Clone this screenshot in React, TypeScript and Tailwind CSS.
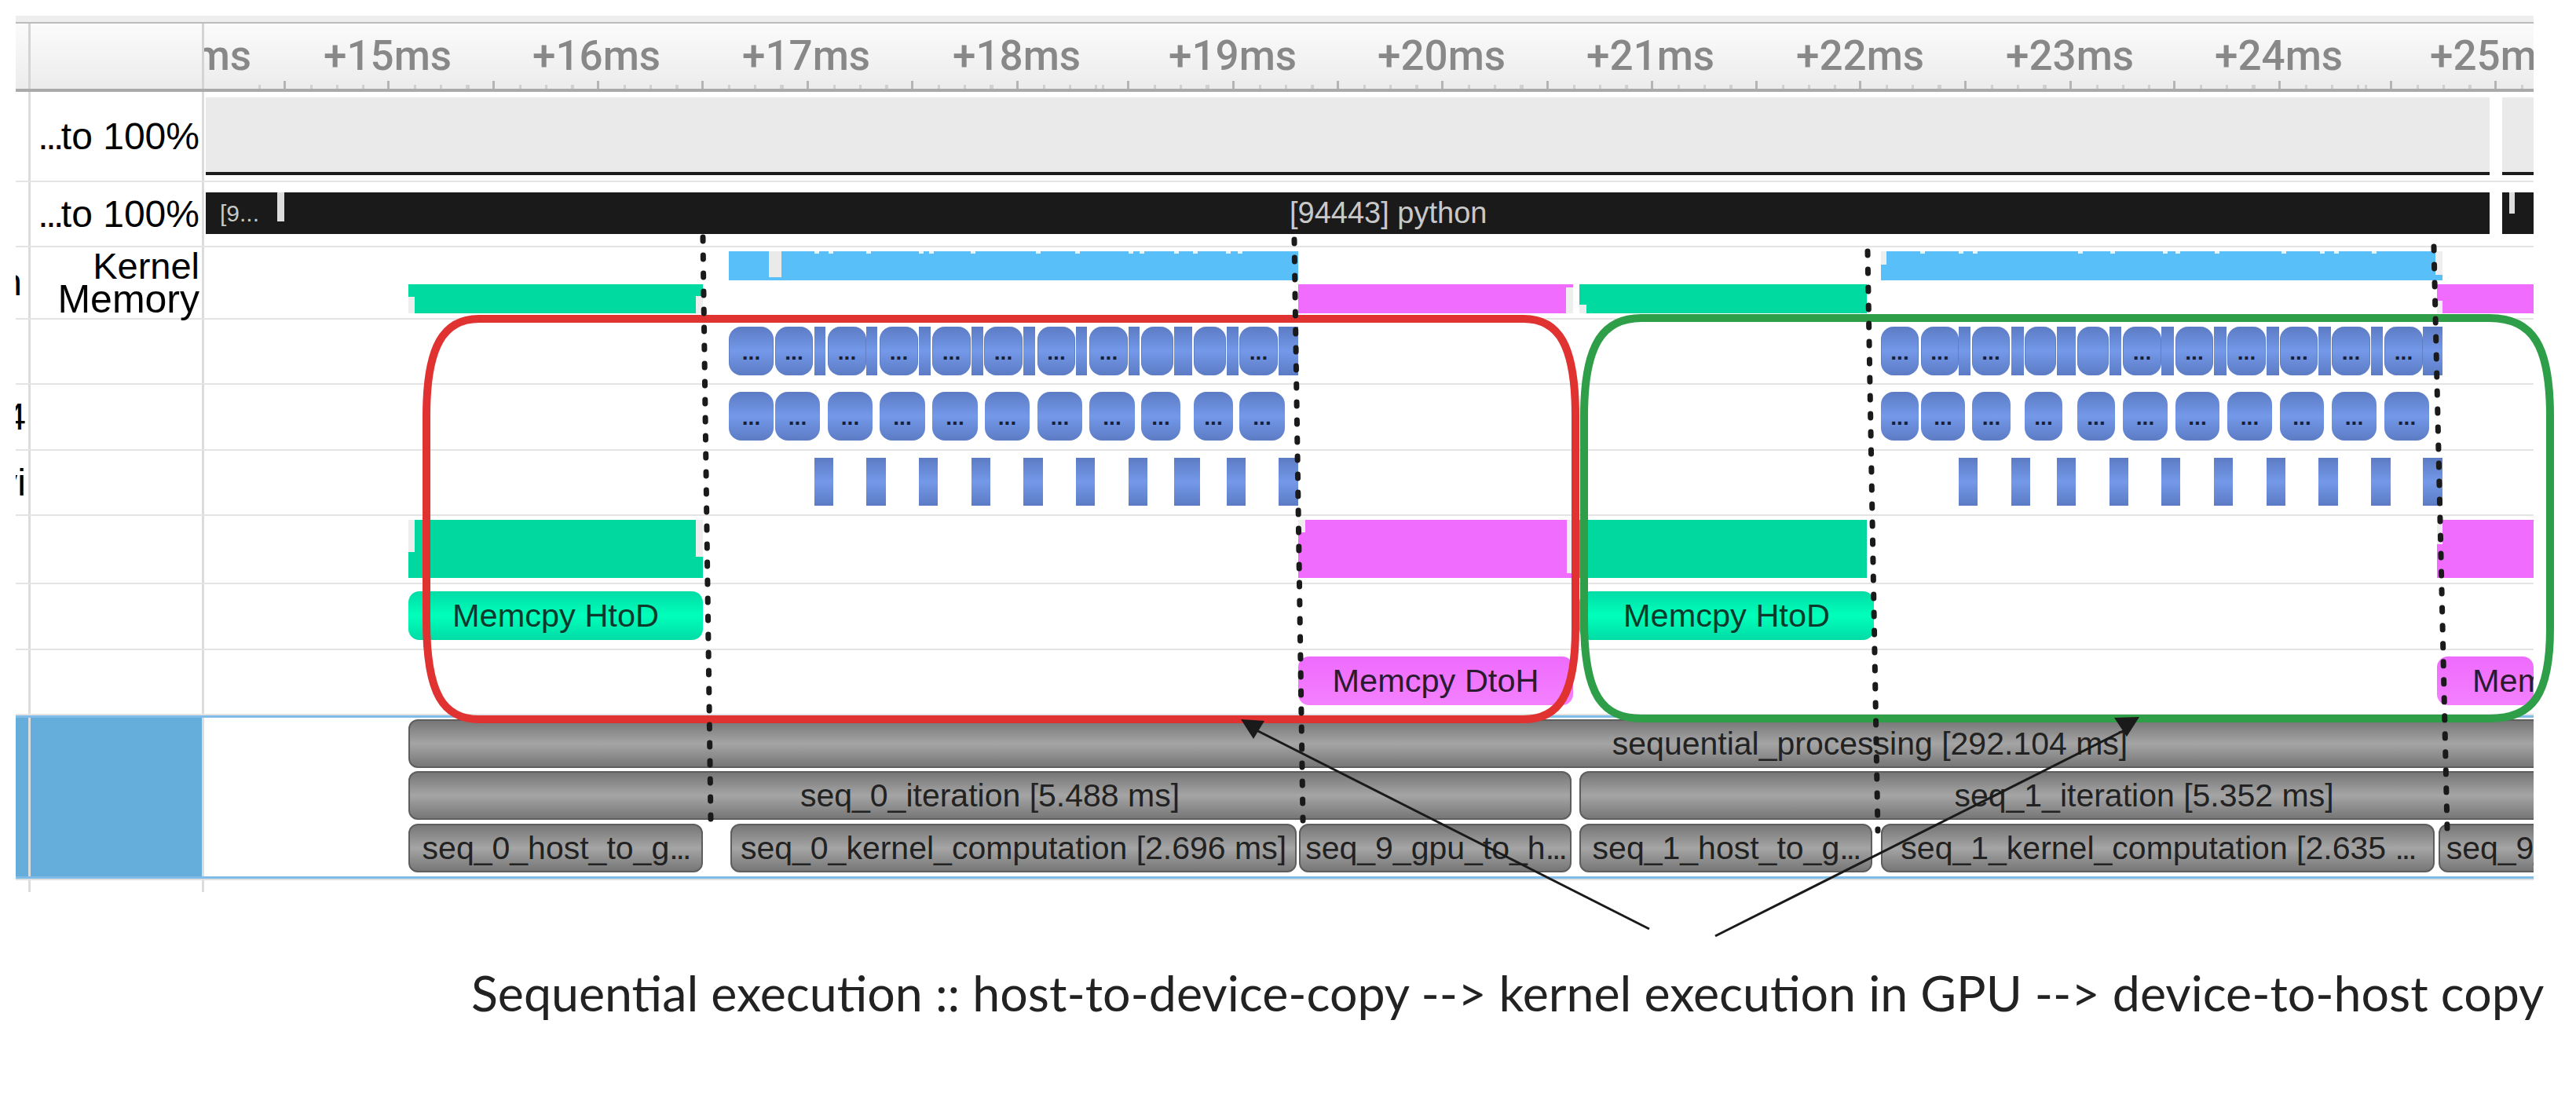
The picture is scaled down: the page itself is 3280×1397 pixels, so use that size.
import type { ReactNode } from 'react';

const TRACK_X = 260;

const rulerLabels: [string, number][] = [
    ['+14ms', 157], ['+15ms', 412], ['+16ms', 678], ['+17ms', 945], ['+18ms', 1213], ['+19ms', 1488],
    ['+20ms', 1754], ['+21ms', 2020], ['+22ms', 2287], ['+23ms', 2554], ['+24ms', 2820], ['+25ms', 3094],
];
const majorTicks = [362, 494, 628, 761, 894, 1028, 1161, 1295, 1436, 1570, 1703, 1836, 1970, 2103, 2236, 2368, 2502, 2636, 2768, 2902, 3044, 3177];

// [start, end, has label]
const chipsA: [number, number, boolean][] = [
    [928, 985, true], [987, 1035, true], [1054, 1103, true], [1120, 1169, true], [1187, 1236, true], [1253, 1302, true],
    [1321, 1369, true], [1387, 1436, true], [1453, 1494, false], [1520, 1561, false], [1578, 1627, true],
    [2395, 2443, true], [2446, 2494, true], [2511, 2559, true], [2578, 2618, false], [2645, 2685, false], [2703, 2752, true],
    [2770, 2818, true], [2836, 2885, true], [2903, 2951, true], [2969, 3018, true], [3036, 3085, true],
];
const barsA: [number, number][] = [
    [1037, 1051], [1103, 1117], [1170, 1185], [1237, 1252], [1303, 1318], [1370, 1384], [1437, 1451], [1495, 1518], [1562, 1577], [1628, 1653],
    [2494, 2509], [2561, 2577], [2619, 2643], [2686, 2701], [2752, 2768], [2819, 2835], [2886, 2902], [2952, 2968], [3019, 3034], [3085, 3110],
];
const chipsB: [number, number][] = [
    [928, 985], [987, 1044], [1054, 1111], [1120, 1178], [1187, 1245], [1254, 1311], [1321, 1378], [1387, 1445], [1453, 1503], [1520, 1570], [1578, 1636],
    [2395, 2443], [2446, 2502], [2511, 2560], [2578, 2626], [2645, 2693], [2703, 2760], [2770, 2826], [2836, 2893], [2903, 2959], [2969, 3026], [3036, 3093],
];
const barsC: [number, number][] = [
    [1037, 1061], [1103, 1128], [1170, 1194], [1237, 1261], [1303, 1328], [1370, 1394], [1437, 1461], [1495, 1528], [1562, 1586], [1628, 1653],
    [2494, 2518], [2561, 2585], [2619, 2643], [2686, 2710], [2752, 2776], [2819, 2843], [2886, 2910], [2952, 2977], [3019, 3044], [3085, 3110],
];
const kernelNotches = [1037, 1055, 1103, 1170, 1183, 1236, 1319, 1369, 1437, 1451, 1495, 1519, 1561, 1576, 2445, 2494, 2512, 2646, 2687, 2754, 2770, 2820, 2905, 2954, 2972, 3020];

const chipBg = 'bg-linear-to-b from-[#5c7bc4] via-[#7499e9] to-[#5c7bc4]';
const sliceBg = 'bg-linear-to-b from-[#777777] via-[#a5a5a5] to-[#777777] border-2 border-[#5e5e5e] rounded-[12px]';

const Box = ({ x, y, w, h, className, children }: { x: number; y: number; w: number; h: number; className: string; children?: ReactNode }) => (
    <div className={`absolute ${className}`} style={{ left: x - TRACK_X, top: y, width: w, height: h }}>
        {children}
    </div>
);

const Row = ({ height, cut, label, className, blue, children }: { height: number; cut?: ReactNode; label?: ReactNode; className?: string; blue?: boolean; children?: ReactNode }) => (
    <div className={`grid grid-cols-[19px_221px_2966px] ${className ?? 'border-b-2 border-[#e4e4e4]'}`} style={{ height }}>
        <div className={`flex items-center justify-end overflow-hidden border-r-[3px] border-[#dcdcdc] text-[48px] leading-none text-black ${blue ? 'bg-[#65aedc]' : ''}`}>
            {cut}
        </div>
        <div className={`flex flex-col items-end justify-center border-r-[3px] border-[#dcdcdc] pr-[3px] text-right text-black ${blue ? 'bg-[#65aedc]' : ''}`}>
            {label}
        </div>
        <div className="relative overflow-hidden">{children}</div>
    </div>
);

const Percent = () => (
    <span className="whitespace-nowrap text-[48px] leading-none">
        <span className="tracking-[-3.5px]">...</span>to 100%
    </span>
);

const Slice = ({ x, y, w, text }: { x: number; y: number; w: number; text?: string }) => (
    <Box x={x} y={y} w={w} h={62} className={`${sliceBg} flex items-center justify-center overflow-hidden`}>
        {text && (
            <span className="whitespace-nowrap text-[41px] leading-none text-[#222]">
                {text.endsWith('...') ? (
                    <>
                        {text.slice(0, -3)}
                        <span className="tracking-[-3px]">...</span>
                    </>
                ) : (
                    text
                )}
            </span>
        )}
    </Box>
);

const Memcpy = ({ x, w, y, text, green, pad }: { x: number; w: number; y: number; text: string; green?: boolean; pad?: boolean }) => (
    <Box
        x={x}
        y={y}
        w={w}
        h={62}
        className={`flex items-center overflow-hidden rounded-[14px] whitespace-nowrap text-[41.5px] ${green ? 'bg-linear-to-b from-[#00dca6] via-[#00ffba] to-[#00dca6] text-[#0b3a2c]' : 'bg-linear-to-b from-[#ee6bfc] to-[#f480ff] text-[#2c1a30]'}`}
    >
        {pad ? <span className="pl-[45px]">{text}</span> : <span className="w-full text-center">{text}</span>}
    </Box>
);

const Overlay = () => (
    <svg className="absolute top-0 left-0" width={3280} height={1397} fill="none">
        <path
            d="M610 406 L1940 406 C1985 406 2006 440 2006 530 L2006 800 C2006 885 1985 916 1940 916 L610 916 C565 916 543 885 543 790 L543 530 C543 440 565 406 610 406 Z"
            stroke="#e13232"
            strokeWidth={10}
        />
        <path
            d="M2090 405 L3170 405 C3225 405 3247 440 3247 530 L3247 800 C3247 885 3225 915 3170 915 L2090 915 C2040 915 2017 885 2017 790 L2017 530 C2017 440 2040 405 2090 405 Z"
            stroke="#2f9e48"
            strokeWidth={10}
        />
        <g stroke="#1a1a1a" strokeWidth={7} strokeLinecap="round" strokeDasharray="5 18">
            <line x1={895} y1={302} x2={905} y2={1045} />
            <line x1={1648} y1={305} x2={1659} y2={1045} />
            <line x1={2378} y1={320} x2={2391} y2={1058} />
            <line x1={3099} y1={314} x2={3116} y2={1055} />
        </g>
        <line x1={2100} y1={1183} x2={1590} y2={925} stroke="#1a1a1a" strokeWidth={3} />
        <polygon points="1580,916 1610,918 1596,941" fill="#1a1a1a" />
        <line x1={2184} y1={1192} x2={2705} y2={930} stroke="#1a1a1a" strokeWidth={3} />
        <polygon points="2692,914 2724,913 2708,938" fill="#1a1a1a" />
    </svg>
);

const App = () => {
    return (
        <div className="relative h-[1397px] w-[3280px] overflow-hidden bg-white font-['Liberation_Sans',Arial,sans-serif]">
            <div className="pt-[20px] pl-[20px]">
                <div className="w-[3206px]">
                    <div className="h-[10px] border-b-2 border-[#bbbbbb] bg-[#eeeeee]" />

                    {/* ruler */}
                    <div className="grid h-[87px] grid-cols-[19px_221px_2966px] border-b-4 border-[#aaaaaa] bg-linear-to-b from-[#fbfbfb] to-[#ececec]">
                        <div className="border-r-[3px] border-[#d4d4d4]" />
                        <div className="border-r-[3px] border-[#d4d4d4]" />
                        <div className="relative overflow-hidden font-['Roboto',sans-serif] text-[53px] leading-[60px] font-medium text-[#888888]">
                            {rulerLabels.map(([text, x]) => (
                                <span key={text} className="absolute top-[11px] whitespace-nowrap" style={{ left: x - TRACK_X }}>
                                    {text}
                                </span>
                            ))}
                            <svg className="absolute top-0 left-0" width={2966} height={83}>
                                {majorTicks.map((x) => (
                                    <g key={x} fill="#b5b5b5">
                                        <rect x={x - TRACK_X - 1} y={73} width={3} height={10} />
                                        {[33, 66, 99].map((d) => (
                                            <rect key={d} x={x - TRACK_X + d} y={78} width={3} height={5} fill="#d0d0d0" />
                                        ))}
                                        <rect x={x - TRACK_X - 33} y={78} width={3} height={5} fill="#d0d0d0" />
                                    </g>
                                ))}
                            </svg>
                        </div>
                    </div>

                    <Row height={115} label={<Percent />}>
                        <Box x={262} y={7} w={2908} h={95} className="bg-[#eaeaea]" />
                        <Box x={3186} y={7} w={40} h={95} className="bg-[#eaeaea]" />
                        <Box x={262} y={102} w={2908} h={4} className="bg-[#1c1c1c]" />
                        <Box x={3186} y={102} w={40} h={4} className="bg-[#1c1c1c]" />
                    </Row>

                    <Row height={83} label={<Percent />}>
                        <Box x={262} y={13} w={2908} h={53} className="bg-[#1a1a1a]" />
                        <Box x={3186} y={13} w={40} h={53} className="bg-[#1a1a1a]" />
                        <Box x={353} y={13} w={9} h={37} className="bg-[#dddddd]" />
                        <Box x={3195} y={13} w={7} h={27} className="bg-[#dddddd]" />
                        <Box x={280} y={13} w={70} h={53} className="flex items-center text-[30px] text-[#c8c8c8]">
                            [9...
                        </Box>
                        <Box x={1642} y={13} w={300} h={53} className="flex items-center text-[38px] whitespace-nowrap text-[#c8c8c8]">
                            [94443] python
                        </Box>
                    </Row>

                    <Row
                        height={92}
                        cut={<span className="pr-[8px]">n</span>}
                        label={
                            <div className="leading-[42px]">
                                <div className="text-[47px]">Kernel</div>
                                <div className="text-[50px]">Memory</div>
                            </div>
                        }
                    >
                        <Box x={928} y={5} w={725} h={37} className="bg-[#58bff8]" />
                        <Box x={979} y={5} w={16} h={33} className="bg-[#eaeaea]" />
                        <Box x={2395} y={5} w={715} h={37} className="bg-[#58bff8]" />
                        <Box x={2395} y={5} w={7} h={17} className="bg-[#eeeeee]" />
                        <Box x={3101} y={5} w={9} h={30} className="bg-[#eeeeee]" />
                        {kernelNotches.map((x) => (
                            <Box key={x} x={x} y={5} w={6} h={3} className="bg-[#e8f4fc]" />
                        ))}

                        <Box x={520} y={47} w={375} h={37} className="bg-[#00d9a0]" />
                        <Box x={520} y={63} w={8} h={21} className="bg-[#eeeeee]" />
                        <Box x={886} y={62} w={9} h={22} className="bg-[#eeeeee]" />
                        <Box x={1653} y={47} w={350} h={37} className="bg-[#f06cff]" />
                        <Box x={1994} y={51} w={9} h={33} className="bg-[#eeeeee]" />
                        <Box x={2011} y={47} w={366} h={37} className="bg-[#00d9a0]" />
                        <Box x={2011} y={73} w={9} h={11} className="bg-[#eeeeee]" />
                        <Box x={3103} y={47} w={123} h={37} className="bg-[#f06cff]" />
                        <Box x={3103} y={68} w={7} h={16} className="bg-[#eeeeee]" />
                    </Row>

                    <Row height={83}>
                        {barsA.map(([a, b]) => (
                            <Box key={a} x={a} y={9} w={b - a} h={62} className={chipBg} />
                        ))}
                        {chipsA.map(([a, b, labelled]) => (
                            <Box key={a} x={a} y={9} w={b - a} h={62} className={`${chipBg} flex justify-center rounded-[16px] border-x border-[#5f7ec6] pt-[18px] text-[28px] leading-[30px] font-bold text-[#16203a]`}>
                                {labelled ? '...' : ''}
                            </Box>
                        ))}
                    </Row>

                    <Row height={84} cut={<span className="pr-[3px]">4</span>}>
                        {chipsB.map(([a, b]) => (
                            <Box key={a} x={a} y={9} w={b - a} h={62} className={`${chipBg} flex justify-center rounded-[16px] pt-[18px] text-[28px] leading-[30px] font-bold text-[#16203a]`}>
                                ...
                            </Box>
                        ))}
                    </Row>

                    <Row height={83} cut={<span className="pr-[3px]">vi</span>}>
                        {barsC.map(([a, b]) => (
                            <Box key={a} x={a} y={9} w={b - a} h={61} className={chipBg} />
                        ))}
                    </Row>

                    <Row height={87}>
                        <Box x={520} y={5} w={375} h={74} className="bg-[#00d8a0]" />
                        <Box x={520} y={5} w={8} h={41} className="bg-[#eeeeee]" />
                        <Box x={886} y={5} w={9} h={47} className="bg-[#eeeeee]" />
                        <Box x={1653} y={5} w={350} h={74} className="bg-[#f06cff]" />
                        <Box x={1653} y={5} w={9} h={16} className="bg-[#eeeeee]" />
                        <Box x={1995} y={5} w={8} h={68} className="bg-[#eeeeee]" />
                        <Box x={2011} y={5} w={366} h={74} className="bg-[#00d8a0]" />
                        <Box x={3103} y={5} w={123} h={74} className="bg-[#f06cff]" />
                        <Box x={3103} y={5} w={7} h={31} className="bg-[#eeeeee]" />
                    </Row>

                    <Row height={84}>
                        <Memcpy x={520} w={375} y={9} text="Memcpy HtoD" green />
                        <Memcpy x={2011} w={375} y={9} text="Memcpy HtoD" green />
                    </Row>

                    <Row height={83}>
                        <Memcpy x={1653} w={350} y={8} text="Memcpy DtoH" />
                        <Memcpy x={3103} w={123} y={8} text="Memcpy DtoH" pad />
                    </Row>

                    <Row height={208} blue className="border-y-[3px] border-[#80bce8]">
                        <Slice x={520} y={2} w={3722} text="sequential_processing [292.104 ms]" />
                        <Slice x={520} y={68} w={1481} text="seq_0_iteration [5.488 ms]" />
                        <Slice x={2011} y={68} w={1438} text="seq_1_iteration [5.352 ms]" />
                        <Slice x={520} y={135} w={375} text="seq_0_host_to_g..." />
                        <Slice x={930} y={135} w={721} text="seq_0_kernel_computation [2.696 ms]" />
                        <Slice x={1654} y={135} w={347} text="seq_9_gpu_to_h..." />
                        <Slice x={2011} y={135} w={373} text="seq_1_host_to_g..." />
                        <Slice x={2395} y={135} w={705} text="seq_1_kernel_computation [2.635 ..." />
                        <Slice x={3105} y={135} w={350} text="seq_9_gpu_to_h..." />
                    </Row>

                    <Row height={17} className="border-t-2 border-[#e0e0e0]" />
                </div>
            </div>

            <p className="pt-[92px] pl-[600px] font-['Lato',sans-serif] text-[62.7px] leading-[72px] whitespace-nowrap text-[#222]">
                Sequential execution :: host-to-device-copy --&gt; kernel execution in GPU --&gt; device-to-host copy
            </p>

            <Overlay />
        </div>
    );
};

export default App;
